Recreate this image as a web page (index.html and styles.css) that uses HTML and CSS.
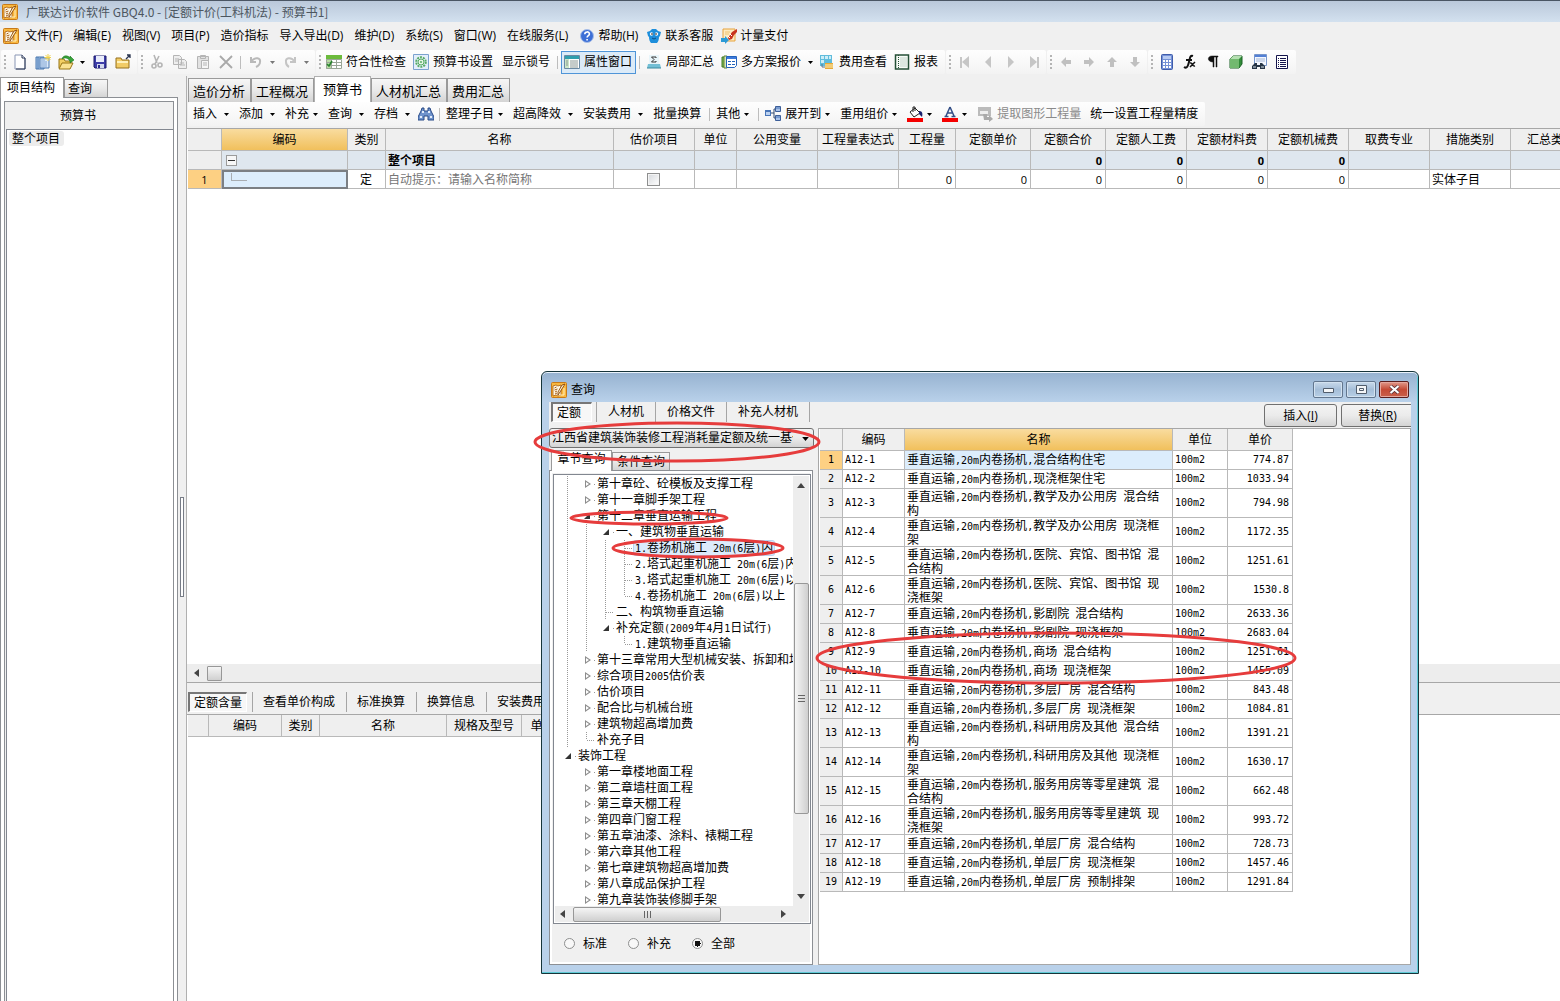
FILE: index.html
```html
<!DOCTYPE html>
<html lang="zh-CN">
<head>
<meta charset="utf-8">
<title>广联达计价软件 GBQ4.0</title>
<link rel="stylesheet" href="styles.css">
</head>
<body>
<svg class="sprite" aria-hidden="true">
  <symbol id="app" viewBox="0 0 16 16"><rect x=".5" y=".5" width="15" height="15" rx="1" fill="#f9b83f" stroke="#c87a18"/><path d="M2 4l3-1 2 1 3-1v10l-3 1-2-1-3 1z" fill="#fff8e4" stroke="#a85c0c" stroke-width=".8"/><path d="M3.500 6l2-1M3.500 8l3-1M4 10l2-1M4 12l2-1" stroke="#a8611a"/><path d="M14 2L9 10l-2 3v-3l4-7z" fill="#fff3d0" stroke="#8c4708" stroke-width=".9"/><path d="M8 13h5V6" fill="none" stroke="#fff0c0"/></symbol>
  <symbol id="dd" viewBox="0 0 5 3"><path d="M0 0h5L2.500 3z" fill="currentColor"/></symbol>
</svg>

<header class="titlebar"><svg class="ic"><use href="#app"/></svg><h1>广联达计价软件 GBQ4.0 - [定额计价(工料机法) - 预算书1]</h1></header>

<nav class="menubar">
  <svg class="ic"><use href="#app"/></svg>
  <button>文件(F)</button><button>编辑(E)</button><button>视图(V)</button><button>项目(P)</button><button>造价指标</button><button>导入导出(D)</button><button>维护(D)</button><button>系统(S)</button><button>窗口(W)</button><button>在线服务(L)</button>
  <button><svg class="ic" viewBox="0 0 16 16"><circle cx="8" cy="8" r="6.500" fill="#3c6fd6" stroke="#a9bfe8"/><path d="M5.800 6.200c0-3 4.600-3 4.600-.2 0 1.700-2.300 1.600-2.300 3.600M8.100 11v1.500" fill="none" stroke="#fff" stroke-width="1.600"/></svg>帮助(H)</button>
  <button class="near"><svg class="ic" viewBox="0 0 16 16"><path d="M1 4l3-1 2-2h4l2 2 3 1-1 4-1 1c0 3-1 5-2 6H5c-1-1-2-3-2-6L2 8z" fill="#1d8edb"/><circle cx="5.500" cy="6" r="1.700" fill="#fff"/><circle cx="10.500" cy="6" r="1.700" fill="#fff"/><circle cx="6" cy="6" r=".8"/><circle cx="10" cy="6" r=".8"/><path d="M6 10l2 1 2-1" stroke="#0b4f86" fill="none"/></svg>联系客服</button>
  <button class="near"><svg class="ic" viewBox="0 0 16 16"><path d="M2 1h12v12H2z" fill="#fdebc0" stroke="#e8a33c"/><path d="M4 4h5M4 6h4" stroke="#f0c272"/><path d="M16 1l-5 3-4 6 1 2 3-1 2-4 3-3z" fill="#c8321e"/><path d="M9 6l2 2M7 8l2 2" stroke="#fff"/><path d="M0 10h4V8l4 4-4 4v-2H0z" fill="#2b9ad6"/></svg>计量支付</button>
</nav>

<div class="toolbars">
  <div class="bar"><span class="grip"></span>
    <button class="tb" aria-label="新建"><svg class="ic" viewBox="0 0 16 16"><path d="M3 1h7l3 3v11H3z" fill="#fff" stroke="#8a97b5"/><path d="M10 1v3h3M13 4v11H4" fill="none" stroke="#26324f"/></svg></button>
    <button class="tb" aria-label="新建项目"><svg class="ic" viewBox="0 0 16 16"><path d="M1 3h8v12H1z" fill="#a9c8ec" stroke="#4976ae"/><path d="M3 3v12M5 4h9v10H5z" fill="#dceafa" stroke="#4976ae"/><path d="M7 5v9M9 5v9M11 7v7" stroke="#7fa3d2"/><path d="M13 0v7M9.500 3.500h7M10.500 1l5 5M15.500 1l-5 5" stroke="#f0d24a"/></svg></button>
    <button class="tb" aria-label="打开"><svg class="ic" viewBox="0 0 16 16"><path d="M1 14V5h5l1 2h6v3" fill="#f3cf62" stroke="#977414"/><path d="M1 15l3-6h11l-3 6z" fill="#fbe391" stroke="#977414"/><path d="M4 5c1-4 6-4 8-1V2l4 4-4 3V7C10 4 7 3 4 5z" fill="#38a53b" stroke="#1b7420" stroke-width=".6"/></svg></button>
    <button class="dd" aria-label="打开选项"><svg><use href="#dd"/></svg></button>
    <button class="tb" aria-label="保存"><svg class="ic" viewBox="0 0 16 16"><path d="M2 2h12v12H3l-1-1z" fill="#3d3da8" stroke="#1b1b6c"/><path d="M4 2h8v6H4z" fill="#e9ecfb"/><path d="M5 10h7v4H5z" fill="#d3d8ee"/><path d="M6 11h2v3H6z" fill="#27278c"/></svg></button>
    <button class="tb" aria-label="关闭文件夹"><svg class="ic" viewBox="0 0 16 16"><path d="M1 4h5l1 2h7v8H1z" fill="#f2cc66" stroke="#96701c"/><path d="M2 8h11" stroke="#fff2bc" stroke-width="2"/><path d="M11 5l4-4M12 1h3v3" fill="none" stroke="#29344f" stroke-width="1.300"/></svg></button>
  </div>
  <div class="bar off"><span class="grip"></span>
    <button class="tb" aria-label="剪切"><svg class="ic" viewBox="0 0 16 16" fill="none" stroke="#b5b5b5" stroke-width="1.600"><path d="M5 1l3 8M10 2L6 10"/><circle cx="5" cy="12" r="2"/><circle cx="11" cy="11" r="2"/></svg></button>
    <button class="tb" aria-label="复制"><svg class="ic" viewBox="0 0 16 16" fill="#eee" stroke="#b5b5b5"><path d="M1.500 1.500h6l2 2v7h-8zM6.500 5.500h6l2 2v7h-8z"/><path d="M3 5h4M3 7h3M8 9h4M8 11h5"/></svg></button>
    <button class="tb" aria-label="粘贴"><svg class="ic" viewBox="0 0 16 16" fill="#e2e2e2" stroke="#b5b5b5"><path d="M2.500 2.500h11v12h-11zM5.500 1.500h5v3h-5z"/><path d="M6.500 6.500h7v8h-7z" fill="#f6f6f6"/><path d="M8 9h4M8 11h4"/></svg></button>
    <button class="tb" aria-label="删除"><svg class="ic" viewBox="0 0 16 16"><path d="M2 2l12 12M14 2L2 14" stroke="#a9a9a9" stroke-width="1.800"/></svg></button>
    <span class="sep"></span>
    <button class="tb" aria-label="撤销"><svg class="ic" viewBox="0 0 16 16" fill="none" stroke="#b9b9b9" stroke-width="2"><path d="M3 3v5h5M3 8c4-6 10-4 9 0 0 2-2 4-4 5"/></svg></button>
    <button class="dd" aria-label="撤销选项"><svg><use href="#dd"/></svg></button>
    <button class="tb" aria-label="恢复"><svg class="ic" viewBox="0 0 16 16" fill="none" stroke="#c4c4c4" stroke-width="2"><path d="M13 3v5H8M13 8C9 2 3 4 4 8c0 2 1 4 3 5"/></svg></button>
    <button class="dd" aria-label="恢复选项"><svg><use href="#dd"/></svg></button>
  </div>
  <div class="bar"><span class="grip"></span>
    <button class="tx"><svg class="ic" viewBox="0 0 16 16"><path d="M0 1h16v14H0z" fill="#fff"/><path d="M0 1h16v4H0z" fill="#6cbb3c"/><path d="M0 5h5v10H0z" fill="#b9dca4"/><path d="M.5 5.500h15v9H.5zM5.500 5v10M10.500 5v10M0 8.500h16M0 11.500h16" fill="none" stroke="#9aa697"/><path d="M1 10l2 2 3-5" fill="none" stroke="#26842c" stroke-width="1.500"/></svg>符合性检查</button>
    <button class="tx"><svg class="ic" viewBox="0 0 16 16"><path d="M.5.500h15v15H.5z" fill="#e3eefb" stroke="#7ba2cf"/><circle cx="8" cy="8" r="4.800" fill="none" stroke="#58ac65" stroke-width="2" stroke-dasharray="2 1"/><circle cx="8" cy="8" r="3" fill="#e5f5e5" stroke="#58ac65"/><circle cx="8" cy="8" r="1" fill="#58ac65"/></svg>预算书设置</button>
    <button class="tx pl">显示锁号</button>
    <span class="sep"></span>
    <button class="tx on"><svg class="ic" viewBox="0 0 16 16"><path d="M.5 1.500h15v13H.5z" fill="#fff" stroke="#6b8aa3"/><path d="M1 2h14v3H1z" fill="#2f9fae"/><path d="M1 5h4v9H1z" fill="#cce6c8"/><path d="M2 7h2M2 9h2M2 11h2M6 7h8M6 9h8M6 11h8M6 13h8" stroke="#8b9894"/></svg>属性窗口</button>
    <span class="sep"></span>
    <button class="tx"><svg class="ic" viewBox="0 0 16 16"><path d="M3 1h10v9H3z" fill="#e8f5fa"/><path d="M2 10h12l1 4H1z" fill="#73bfd5"/><path d="M1 14h14" stroke="#3b8aa0"/><path d="M10 4V3H5.500l2.500 2.500L5.500 8H10V7" fill="none" stroke="#333"/></svg>局部汇总</button>
    <button class="tx"><svg class="ic" viewBox="0 0 16 16"><path d="M1 3h3v10H1z" fill="#7eb650" stroke="#3f7a28"/><path d="M3 2h3v12H3z" fill="#d8e6b8" stroke="#5f8432"/><path d="M5.500 2.500h10v9l-2 2h-8z" fill="#fff" stroke="#2362bb"/><path d="M6 4h9" stroke="#3e7bdb" stroke-width="2"/><path d="M7 7h3v1H7zM11 7h3v1h-3zM7 10h3v1H7zM11 10h3v1h-3z" fill="#2362bb"/></svg>多方案报价</button>
    <button class="dd" aria-label="多方案选项"><svg><use href="#dd"/></svg></button>
    <button class="tx"><svg class="ic" viewBox="0 0 16 16"><path d="M1 1h12v11H1z" fill="#60bcdc"/><path d="M2 2h3v3H2zM6 2h3v3H6zM10 2h2v3h-2zM2 6h3v3H2z" fill="#cceef8"/><path d="M6 9h8v6H6z" fill="#e6a93a"/><path d="M6 11h8M6 13h8" stroke="#fff0b5"/><path d="M3 10v3h3" stroke="#58728c" fill="none"/></svg>费用查看</button>
    <button class="tx"><svg class="ic" viewBox="0 0 16 16"><path d="M1.500 1h13v14h-13z" fill="#f6fbf6" stroke="#244f36" stroke-width="1.500"/><path d="M4.500 1v14" stroke="#244f36" stroke-dasharray="1 1"/><path d="M6 4h7M6 6h7M6 8h7M6 10h7M6 12h7" stroke="#c3d3ca"/></svg>报表</button>
  </div>
  <div class="bar off nav"><span class="grip"></span>
    <button class="tb" aria-label="首条"><svg class="ic" viewBox="0 0 16 16"><path d="M4 3v11" stroke="#c6c6c6" stroke-width="2"/><path d="M12 2v12L5 8z" fill="#c6c6c6"/></svg></button>
    <button class="tb" aria-label="上一条"><svg class="ic" viewBox="0 0 16 16"><path d="M11 2v12L5 8z" fill="#c6c6c6"/></svg></button>
    <button class="tb" aria-label="下一条"><svg class="ic" viewBox="0 0 16 16"><path d="M5 2v12l6-6z" fill="#c6c6c6"/></svg></button>
    <button class="tb" aria-label="末条"><svg class="ic" viewBox="0 0 16 16"><path d="M12 3v11" stroke="#c6c6c6" stroke-width="2"/><path d="M4 2v12l7-6z" fill="#c6c6c6"/></svg></button>
  </div>
  <div class="bar off nav"><span class="grip"></span>
    <button class="tb" aria-label="左移"><svg class="ic" viewBox="0 0 16 16"><path d="M3 8l5-5v3h5v4H8v3z" fill="#c0c0c0"/></svg></button>
    <button class="tb" aria-label="右移"><svg class="ic" viewBox="0 0 16 16"><path d="M13 8L8 3v3H3v4h5v3z" fill="#c0c0c0"/></svg></button>
    <button class="tb" aria-label="上移"><svg class="ic" viewBox="0 0 16 16"><path d="M8 3l5 5h-3v5H6V8H3z" fill="#c0c0c0"/></svg></button>
    <button class="tb" aria-label="下移"><svg class="ic" viewBox="0 0 16 16"><path d="M8 13l5-5h-3V3H6v5H3z" fill="#c0c0c0"/></svg></button>
  </div>
  <div class="bar"><span class="grip"></span>
    <button class="tb" aria-label="计算器"><svg class="ic" viewBox="0 0 16 16"><rect x="2.500" y=".5" width="11" height="15" rx="1" fill="#7491d6" stroke="#3f5cab"/><path d="M4 2h8v3H4z" fill="#b7caf2"/><path d="M4 7h8M4 10h8M4 13h8" stroke="#fff" stroke-width="2" stroke-dasharray="2 1"/></svg></button>
    <button class="tb" aria-label="函数"><svg class="ic" viewBox="0 0 16 16" fill="none" stroke="#111"><path d="M11 2C8 1 8 4 7 8s-2 7-5 5M4 6h6" stroke-width="2"/><path d="M8 9c3-1 2 4 5 3M13 8l-5 5" stroke-width="1.500"/></svg></button>
    <button class="tb" aria-label="段落"><svg class="ic" viewBox="0 0 16 16"><path d="M13 2v1h-1v10h-1V3H9v10H8V8C2 8 2 2 7 2z" fill="#111" stroke="#111" stroke-width=".5"/></svg></button>
    <button class="tb" aria-label="图元"><svg class="ic" viewBox="0 0 16 16"><path d="M2 5l3-3h9v8l-3 4H2z" fill="#318c38" stroke="#1b6125"/><path d="M2 5h9v9H2z" fill="#72b96f"/><path d="M2 5l3-3h9l-3 3z" fill="#b4dfb0"/></svg></button>
    <button class="tb" aria-label="查找"><svg class="ic" viewBox="0 0 16 16"><path d="M3.500.500h12v11h-12z" fill="#f3f7ff" stroke="#7897cb"/><path d="M4 2h11" stroke="#5380d5" stroke-width="2"/><path d="M5 5h9M5 7h9" stroke="#a5b7d5"/><path d="M1 12l3-3h2v2h3V9h2l3 3v3H9v-2H6v2H1z" fill="#263545"/><path d="M2 13h3M10 13h3" stroke="#d9e4ee"/></svg></button>
    <button class="tb" aria-label="列表"><svg class="ic" viewBox="0 0 16 16"><path d="M2.500 1.500h11v13h-11z" fill="#fff" stroke="#15154d"/><path d="M4 4.500h1M6 4.500h6M4 6.500h1M6 6.500h6M4 8.500h1M6 8.500h6M4 10.500h1M6 10.500h6M4 12.500h1M6 12.500h6" stroke="#15154d"/></svg></button>
  </div>
</div>

<main class="work">
  <aside class="side">
    <div class="tabs lt"><button class="tab active">项目结构</button><button class="tab">查询</button></div>
    <div class="sheet"><div class="inner"><h2>预算书</h2><div class="ptree"><span>整个项目</span></div></div></div>
  </aside>
  <div class="splitter"><i></i></div>
  <section class="content">
    <div class="tabs rt"><button class="tab">造价分析</button><button class="tab">工程概况</button><button class="tab active">预算书</button><button class="tab">人材机汇总</button><button class="tab">费用汇总</button></div>
    <div class="subbar"><div class="bar">
      <button class="mn far">插入<svg><use href="#dd"/></svg></button>
      <button class="mn far">添加<svg><use href="#dd"/></svg></button>
      <button class="mn">补充<svg><use href="#dd"/></svg></button>
      <button class="mn far">查询<svg><use href="#dd"/></svg></button>
      <button class="mn far">存档<svg><use href="#dd"/></svg></button>
      <button class="ib" aria-label="查找"><svg class="ic" viewBox="0 0 16 16"><path d="M3 5l1-3h2v3h4V2h2l1 3 3 6v3h-6v-4H6v4H0v-3z" fill="#6f93cc" stroke="#294a87"/><path d="M2 11h2M12 11h2M4 6h2M10 6h2" stroke="#e3edfb" stroke-width="2"/></svg></button>
      <span class="sep"></span>
      <button class="mn">整理子目<svg><use href="#dd"/></svg></button>
      <button class="mn far">超高降效<svg><use href="#dd"/></svg></button>
      <button class="mn far">安装费用<svg><use href="#dd"/></svg></button>
      <button class="mn">批量换算</button>
      <span class="sep"></span>
      <button class="mn">其他<svg><use href="#dd"/></svg></button>
      <span class="sep"></span>
      <button class="mn"><svg class="ic" viewBox="0 0 16 16"><path d="M0 4h6v6H0z" fill="#4975b7"/><path d="M1 6h4v3H1z" fill="#bcd2f1"/><path d="M6 7h3M9 3v9M9 3h2M9 12h2" stroke="#324b70" fill="none"/><path d="M10.500.500h5v5h-5zM10.500 9.500h5v5h-5z" fill="#a9c2e8" stroke="#3d5f99"/><path d="M11 2h4M11 11h4" stroke="#4975b7"/></svg>展开到<svg><use href="#dd"/></svg></button>
      <button class="mn">重用组价<svg><use href="#dd"/></svg></button>
      <button class="mn" aria-label="填充颜色"><svg class="ic" viewBox="0 0 16 16"><path d="M3 6l5-4 5 5-6 4z" fill="#fff" stroke="#222"/><path d="M6 6V1h2v4" fill="none" stroke="#222"/><path d="M12 5c3 0 4 2 3 6l-3-3z" fill="#18206d"/><path d="M0 12h16v4H0z" fill="#f50000"/></svg><svg><use href="#dd"/></svg></button>
      <button class="mn" aria-label="文字颜色"><svg class="ic" viewBox="0 0 16 16"><path d="M8 1L4 10M8 1l4 9M5.500 7h5M2.500 10.500h4M9.500 10.500h4" stroke="#344f87" stroke-width="1.500" fill="none"/><path d="M0 12h16v4H0z" fill="#f50000"/></svg><svg><use href="#dd"/></svg></button>
      <button class="mn dim" disabled><svg class="ic" viewBox="0 0 16 16"><path d="M1 1h13v9H1z" fill="#bbb"/><path d="M3 5h8v3H3z" fill="#eee"/><path d="M6 8h4v3h2V9l4 4-4 3v-2H7z" fill="#aaa"/></svg>提取图形工程量</button>
      <button class="mn">统一设置工程量精度</button>
    </div></div>
    <div class="gridbox">
      <table class="grid main">
        <colgroup><col class="w34"><col class="w126"><col class="w38"><col class="w228"><col class="w81"><col class="w42"><col class="w81"><col class="w81"><col class="w57"><col class="w75"><col class="w75"><col class="w81"><col class="w81"><col class="w81"><col class="w81"><col class="w81"><col class="w81"></colgroup>
        <thead><tr><th></th><th class="hot">编码</th><th>类别</th><th>名称</th><th>估价项目</th><th>单位</th><th>公用变量</th><th>工程量表达式</th><th>工程量</th><th>定额单价</th><th>定额合价</th><th>定额人工费</th><th>定额材料费</th><th>定额机械费</th><th>取费专业</th><th>措施类别</th><th>汇总类别</th></tr></thead>
        <tbody>
          <tr class="sum"><th></th><td><button class="minus" aria-label="折叠"></button></td><td></td><td>整个项目</td><td></td><td></td><td></td><td></td><td></td><td></td><td class="n">0</td><td class="n">0</td><td class="n">0</td><td class="n">0</td><td></td><td></td><td></td></tr>
          <tr><th class="cur">1</th><td class="sel"><i class="elbow"></i></td><td class="c">定</td><td class="hint">自动提示：请输入名称简称</td><td class="c"><input type="checkbox" aria-label="估价项目"></td><td></td><td></td><td></td><td class="n">0</td><td class="n">0</td><td class="n">0</td><td class="n">0</td><td class="n">0</td><td class="n">0</td><td></td><td>实体子目</td><td></td></tr>
        </tbody>
      </table>
      <div class="hbar"><svg class="ar" viewBox="0 0 5 8"><path d="M5 0v8L0 4z"/></svg><i></i></div>
    </div>
    <div class="lower">
      <div class="flat"><button class="press">定额含量</button><button>查看单价构成</button><button>标准换算</button><button>换算信息</button><button>安装费用</button></div>
      <div class="lgrid">
        <table class="grid low">
          <colgroup><col class="w21"><col class="w73"><col class="w38"><col class="w127"><col class="w75"><col class="w42"></colgroup>
          <thead><tr><th></th><th>编码</th><th>类别</th><th>名称</th><th>规格及型号</th><th>单位</th></tr></thead>
        </table>
      </div>
    </div>
  </section>
</main>

<section class="dialog" role="dialog" aria-labelledby="dt">
  <header class="dtitle"><svg class="ic"><use href="#app"/></svg><h2 id="dt">查询</h2>
    <div class="ctl">
      <button aria-label="最小化"><svg viewBox="0 0 11 9"><path d="M.5 3.500h10v4H.5z" fill="#f4f6f8" stroke="#515d6c"/></svg></button>
      <button aria-label="最大化"><svg viewBox="0 0 11 9"><path d="M.5.500h10v8H.5zM3.500 3.500h4v2h-4z" fill="#f4f6f8" stroke="#515d6c"/></svg></button>
      <button class="x" aria-label="关闭"><svg viewBox="0 0 11 9"><path d="M1.500 1l8 7M9.500 1l-8 7" stroke="#53303a" stroke-width="3.600"/><path d="M1.500 1l8 7M9.500 1l-8 7" stroke="#fff" stroke-width="2.200"/></svg></button>
    </div>
  </header>
  <div class="dbody">
    <div class="dtop">
      <div class="flat"><button class="press">定额</button><button>人材机</button><button>价格文件</button><button>补充人材机</button></div>
      <div class="acts"><button>插入(<u>I</u>)</button><button>替换(<u>R</u>)</button></div>
    </div>
    <div class="dcols">
      <div class="dleft">
        <div class="combo"><select aria-label="定额库"><option>江西省建筑装饰装修工程消耗量定额及统一基价表</option></select><svg><use href="#dd"/></svg></div>
        <div class="tabs qt"><button class="tab active">章节查询</button><button class="tab">条件查询</button></div>
        <div class="qpage">
          <div class="treebox">
            <ul class="tree">
              <li><i class="v"></i><i class="a"></i><span>第十章砼、砼模板及支撑工程</span></li>
              <li><i class="v"></i><i class="a"></i><span>第十一章脚手架工程</span></li>
              <li><i class="v"></i><i class="o"></i><span>第十二章垂直运输工程</span></li>
              <li><i class="v"></i><i class="v"></i><i class="o"></i><span>一、建筑物垂直运输</span></li>
              <li><i class="v"></i><i class="v"></i><i class="v"></i><i class="t"></i><span class="pick"><b>1.</b>卷扬机施工<b> 20m(6</b>层<b>)</b>内</span></li>
              <li><i class="v"></i><i class="v"></i><i class="v"></i><i class="t"></i><span><b>2.</b>塔式起重机施工<b> 20m(6</b>层<b>)</b>内</span></li>
              <li><i class="v"></i><i class="v"></i><i class="v"></i><i class="t"></i><span><b>3.</b>塔式起重机施工<b> 20m(6</b>层<b>)</b>以上</span></li>
              <li><i class="v"></i><i class="v"></i><i class="v"></i><i class="e"></i><span><b>4.</b>卷扬机施工<b> 20m(6</b>层<b>)</b>以上</span></li>
              <li><i class="v"></i><i class="v"></i><i class="t"></i><span>二、构筑物垂直运输</span></li>
              <li><i class="v"></i><i class="v"></i><i class="o"></i><span>补充定额<b>(2009</b>年<b>4</b>月<b>1</b>日试行<b>)</b></span></li>
              <li><i class="v"></i><i class="v"></i><i></i><i class="e"></i><span><b>1.</b>建筑物垂直运输</span></li>
              <li><i class="v"></i><i class="a"></i><span>第十三章常用大型机械安装、拆卸和场外运输</span></li>
              <li><i class="v"></i><i class="a"></i><span>综合项目<b>2005</b>估价表</span></li>
              <li><i class="v"></i><i class="a"></i><span>估价项目</span></li>
              <li><i class="v"></i><i class="a"></i><span>配合比与机械台班</span></li>
              <li><i class="v"></i><i class="a"></i><span>建筑物超高增加费</span></li>
              <li><i class="v"></i><i class="e"></i><span>补充子目</span></li>
              <li><i class="o"></i><span>装饰工程</span></li>
              <li><i></i><i class="a"></i><span>第一章楼地面工程</span></li>
              <li><i></i><i class="a"></i><span>第二章墙柱面工程</span></li>
              <li><i></i><i class="a"></i><span>第三章天棚工程</span></li>
              <li><i></i><i class="a"></i><span>第四章门窗工程</span></li>
              <li><i></i><i class="a"></i><span>第五章油漆、涂料、裱糊工程</span></li>
              <li><i></i><i class="a"></i><span>第六章其他工程</span></li>
              <li><i></i><i class="a"></i><span>第七章建筑物超高增加费</span></li>
              <li><i></i><i class="a"></i><span>第八章成品保护工程</span></li>
              <li><i></i><i class="a"></i><span>第九章装饰装修脚手架</span></li>
            </ul>
            <div class="vs"><svg class="arv" viewBox="0 0 8 5"><path d="M0 5h8L4 0z"/></svg><i></i><svg class="arv" viewBox="0 0 8 5"><path d="M0 0h8L4 5z"/></svg></div>
            <div class="hs"><svg class="ar" viewBox="0 0 5 8"><path d="M5 0v8L0 4z"/></svg><i></i><svg class="ar" viewBox="0 0 5 8"><path d="M0 0v8l5-4z"/></svg></div>
          </div>
          <div class="radios"><label><input type="radio" name="r">标准</label><label><input type="radio" name="r">补充</label><label><input type="radio" name="r" checked>全部</label></div>
        </div>
      </div>
      <div class="dright">
        <table class="grid quota">
          <colgroup><col class="w23"><col class="w62"><col class="w268"><col class="w55"><col class="w65"></colgroup>
          <thead><tr><th></th><th>编码</th><th class="hot">名称</th><th>单位</th><th>单价</th></tr></thead>
          <tbody>
            <tr><th class="cur">1</th><td class="m">A12-1</td><td class="lit">垂直运输<b>,20m</b>内卷扬机<b>,</b>混合结构住宅</td><td class="m">100m2</td><td class="m n">774.87</td></tr>
            <tr><th>2</th><td class="m">A12-2</td><td>垂直运输<b>,20m</b>内卷扬机<b>,</b>现浇框架住宅</td><td class="m">100m2</td><td class="m n">1033.94</td></tr>
            <tr class="two"><th>3</th><td class="m">A12-3</td><td>垂直运输<b>,20m</b>内卷扬机<b>,</b>教学及办公用房<b> </b>混合结构</td><td class="m">100m2</td><td class="m n">794.98</td></tr>
            <tr class="two"><th>4</th><td class="m">A12-4</td><td>垂直运输<b>,20m</b>内卷扬机<b>,</b>教学及办公用房<b> </b>现浇框架</td><td class="m">100m2</td><td class="m n">1172.35</td></tr>
            <tr class="two"><th>5</th><td class="m">A12-5</td><td>垂直运输<b>,20m</b>内卷扬机<b>,</b>医院、宾馆、图书馆<b> </b>混合结构</td><td class="m">100m2</td><td class="m n">1251.61</td></tr>
            <tr class="two"><th>6</th><td class="m">A12-6</td><td>垂直运输<b>,20m</b>内卷扬机<b>,</b>医院、宾馆、图书馆<b> </b>现浇框架</td><td class="m">100m2</td><td class="m n">1530.8</td></tr>
            <tr><th>7</th><td class="m">A12-7</td><td>垂直运输<b>,20m</b>内卷扬机<b>,</b>影剧院<b> </b>混合结构</td><td class="m">100m2</td><td class="m n">2633.36</td></tr>
            <tr><th>8</th><td class="m">A12-8</td><td>垂直运输<b>,20m</b>内卷扬机<b>,</b>影剧院<b> </b>现浇框架</td><td class="m">100m2</td><td class="m n">2683.04</td></tr>
            <tr><th>9</th><td class="m">A12-9</td><td>垂直运输<b>,20m</b>内卷扬机<b>,</b>商场<b> </b>混合结构</td><td class="m">100m2</td><td class="m n">1251.61</td></tr>
            <tr><th>10</th><td class="m">A12-10</td><td>垂直运输<b>,20m</b>内卷扬机<b>,</b>商场<b> </b>现浇框架</td><td class="m">100m2</td><td class="m n">1455.09</td></tr>
            <tr><th>11</th><td class="m">A12-11</td><td>垂直运输<b>,20m</b>内卷扬机<b>,</b>多层厂房<b> </b>混合结构</td><td class="m">100m2</td><td class="m n">843.48</td></tr>
            <tr><th>12</th><td class="m">A12-12</td><td>垂直运输<b>,20m</b>内卷扬机<b>,</b>多层厂房<b> </b>现浇框架</td><td class="m">100m2</td><td class="m n">1084.81</td></tr>
            <tr class="two"><th>13</th><td class="m">A12-13</td><td>垂直运输<b>,20m</b>内卷扬机<b>,</b>科研用房及其他<b> </b>混合结构</td><td class="m">100m2</td><td class="m n">1391.21</td></tr>
            <tr class="two"><th>14</th><td class="m">A12-14</td><td>垂直运输<b>,20m</b>内卷扬机<b>,</b>科研用房及其他<b> </b>现浇框架</td><td class="m">100m2</td><td class="m n">1630.17</td></tr>
            <tr class="two"><th>15</th><td class="m">A12-15</td><td>垂直运输<b>,20m</b>内卷扬机<b>,</b>服务用房等零星建筑<b> </b>混合结构</td><td class="m">100m2</td><td class="m n">662.48</td></tr>
            <tr class="two"><th>16</th><td class="m">A12-16</td><td>垂直运输<b>,20m</b>内卷扬机<b>,</b>服务用房等零星建筑<b> </b>现浇框架</td><td class="m">100m2</td><td class="m n">993.72</td></tr>
            <tr><th>17</th><td class="m">A12-17</td><td>垂直运输<b>,20m</b>内卷扬机<b>,</b>单层厂房<b> </b>混合结构</td><td class="m">100m2</td><td class="m n">728.73</td></tr>
            <tr><th>18</th><td class="m">A12-18</td><td>垂直运输<b>,20m</b>内卷扬机<b>,</b>单层厂房<b> </b>现浇框架</td><td class="m">100m2</td><td class="m n">1457.46</td></tr>
            <tr><th>19</th><td class="m">A12-19</td><td>垂直运输<b>,20m</b>内卷扬机<b>,</b>单层厂房<b> </b>预制排架</td><td class="m">100m2</td><td class="m n">1291.84</td></tr>
          </tbody>
        </table>
      </div>
    </div>
  </div>
  <svg class="marks" viewBox="0 0 878 603" aria-hidden="true" fill="none" stroke="#e63c3c" stroke-width="3">
    <ellipse cx="136" cy="71" rx="142" ry="19"/>
    <ellipse cx="108" cy="147" rx="78" ry="6"/>
    <ellipse cx="157" cy="177" rx="85" ry="9"/>
    <ellipse cx="515" cy="287" rx="239" ry="25"/>
  </svg>
</section>
</body>
</html>
```
FILE: styles.css
```css
* { box-sizing: border-box; }
html, body { height: 100%; }
body {
  margin: 0;
  display: flex;
  flex-direction: column;
  overflow: hidden;
  background: #f0f0f0;
  color: #000;
  font: 12px/16px "Open Sans", "Noto Sans CJK SC", sans-serif;
}
h1, h2 { margin: 0; font-size: 12px; font-weight: normal; }
button { margin: 0; padding: 0; border: 0; background: none; color: inherit; font: inherit; white-space: nowrap; flex: none; }
svg { display: block; flex: none; }
i { display: block; flex: none; }
.sprite { display: none; }
.ic { width: 16px; height: 16px; }

/* Title and menu */
.titlebar {
  flex: none;
  display: flex;
  align-items: center;
  gap: 8px;
  height: 22px;
  padding-left: 2px;
  border-top: 1px solid #4a5563;
  background: linear-gradient(#bac8da, #d3e1ef);
  color: #4c5660;
}
.titlebar h1 { font-family: "Noto Sans CJK SC", sans-serif; }
.menubar { flex: none; display: flex; align-items: center; gap: 11px; height: 28px; padding: 0 3px; }
.menubar > .ic { margin-right: -5px; }
.menubar button { display: flex; align-items: center; gap: 3px; }
.menubar .near { margin-left: -3px; }

/* Toolbars */
.toolbars { flex: none; display: flex; gap: 1px; height: 26px; padding-left: 1px; }
.bar { flex: none; display: flex; align-items: center; height: 24px; padding-right: 3px; border-radius: 2px; background: linear-gradient(#fefefe, #f3f3f3); }
.grip { width: 2px; height: 14px; margin: 0 2px 0 3px; background: repeating-linear-gradient(#b4b4b4 0 2px, transparent 2px 4px); }
.tb { display: flex; justify-content: center; width: 23px; }
.dd { display: flex; justify-content: center; width: 11px; }
.dd svg, .mn svg:not(.ic), .combo svg { width: 5px; height: 3px; }
.off .dd { color: #777; }
.tx { display: flex; align-items: center; gap: 4px; height: 23px; padding: 0 4px 0 3px; }
.tx.pl { padding-left: 5px; }
.tx.on { border: 1px solid #4f95d8; padding: 0 3px 0 2px; background: #dcebf8; }
.sep { width: 1px; height: 13px; margin: 0 3px; background: #bdbdbd; }
.nav { padding-right: 1px; }

/* Tabs shared by all three tab strips */
.tabs { flex: none; display: flex; align-items: flex-end; }
.tab { border: 1px solid #9a9a9a; background: linear-gradient(#f6f6f6, #e9e9e9 50%, #d4d4d4); border-bottom: 0; }
.tab.active { position: relative; background: #fff; }

.work { flex: 1; display: flex; min-height: 0; }
.side { flex: none; display: flex; flex-direction: column; width: 178px; }
.lt { height: 21px; }
.lt .tab { height: 18px; width: 44px; padding-right: 12px; }
.lt .tab.active { height: 21px; width: 64px; padding-right: 2px; margin-bottom: -1px; }
.sheet { flex: 1; display: flex; padding: 3px 3px 0; border: 1px solid #8c8f94; border-bottom: 0; background: #fff; }
.inner { flex: 1; display: flex; flex-direction: column; border: 1px solid #8c8f94; border-bottom: 0; background: #f0f0f0; }
.inner h2 { height: 27px; padding-right: 22px; line-height: 27px; text-align: center; }
.ptree { flex: 1; margin-left: 1px; border: 1px solid #828790; border-width: 1px 0 0 1px; background: #fff; padding: 1px 2px; }
.ptree span { display: inline-block; height: 15px; padding: 0 4px 0 3px; border-radius: 3px; background: #ececec; line-height: 15px; }
.splitter { flex: none; display: flex; align-items: center; justify-content: center; width: 9px; border-right: 1px solid #b0b0b0; }
.splitter i { width: 4px; height: 100px; margin-top: 16px; border: 1px solid #777c86; background: #fff; }

.content { flex: 1; display: flex; flex-direction: column; min-width: 0; }
.rt { height: 26px; padding-left: 1px; font-size: 13px; }
.rt .tab { height: 24px; padding: 0 5px 0 4px; }
.rt .tab.active { height: 26px; padding: 0 8px 2px; border-color: #b0b0b0; }
.subbar { flex: none; height: 26px; display: flex; padding-left: 1px; }
.subbar .sep { margin: 0 1px 0 4px; }
.mn { display: flex; align-items: center; gap: 4px; height: 22px; padding: 0 4px 0 5px; }
.mn.far { gap: 7px; }
.mn:has(svg:not(.ic)) { padding-right: 5px; }
.ib { display: flex; justify-content: center; width: 18px; margin-left: 2px; }
.dim { color: #8a8a8a; }

/* Data grids */
.gridbox { flex: 1; display: flex; flex-direction: column; min-height: 0; overflow: hidden; border: 1px solid #a7a7a7; border-width: 1px 0; background: #fff; }
.grid { table-layout: fixed; border-collapse: separate; border-spacing: 0; width: 0; flex: none; }
.main, .low { margin-left: 1px; }
.grid th, .grid td { height: 19px; padding: 0 3px 0 2px; border: 1px solid #b9b9b9; border-width: 0 1px 1px 0; font-weight: normal; line-height: 13px; text-align: left; overflow: hidden; }
.grid th { padding: 0; background: #efefef; text-align: center; }
.grid thead th { height: 22px; white-space: nowrap; }
.grid thead .hot { background: linear-gradient(#f9dc9f, #f1c05c); }
.grid tbody .cur { background: #fdd083; }
.grid .n { text-align: right; }
.grid .c { text-align: center; }
.grid .sum td { background: #dfe7ef; font-weight: bold; }
.main .n, .main tbody th { font-size: 11px; }
.grid td.hint { color: #767676; }
.grid td.sel { border: 2px solid #7b7f84; background: #dcedfc; }
.elbow { width: 16px; height: 8px; margin: -6px 0 0 5px; border: 1px solid #a8adb2; border-width: 0 0 1px 1px; }
.minus { display: flex; align-items: center; justify-content: center; width: 11px; height: 11px; margin-left: 2px; border: 1px solid #9b9b9b; background: #f7f7f7; }
.minus::before { content: ""; width: 7px; height: 1px; background: #333; }
.w21 { width: 21px; } .w23 { width: 23px; } .w34 { width: 34px; } .w38 { width: 38px; }
.w42 { width: 42px; } .w55 { width: 55px; } .w57 { width: 57px; } .w62 { width: 62px; }
.w65 { width: 65px; } .w73 { width: 73px; } .w75 { width: 75px; } .w81 { width: 81px; }
.w126 { width: 126px; } .w127 { width: 127px; } .w228 { width: 228px; } .w268 { width: 268px; }
input[type=checkbox] { appearance: none; display: block; width: 13px; height: 13px; margin: 0 auto; border: 1px solid #8e8f8f; background: linear-gradient(135deg, #d5d8dc, #fff); box-shadow: inset 0 0 0 1px #f4f4f4; }

.hbar, .hs { display: flex; align-items: center; background: #ededed; }
.hbar { height: 18px; margin-top: auto; padding-left: 7px; gap: 8px; }
.ar { width: 5px; height: 8px; fill: #444; }
.arv { width: 8px; height: 5px; fill: #444; }
.hbar i { width: 15px; height: 15px; border: 1px solid #979797; border-radius: 1px; background: linear-gradient(#f5f5f5, #d0d0d0); }

.lower { flex: none; display: flex; flex-direction: column; height: 318px; padding-top: 8px; overflow: hidden; }
.flat { display: flex; }
.flat button { height: 20px; padding: 0 11px 0 10px; margin-top: 1px; border-right: 1px solid #a5a5a5; }
.flat .press { border: 1px solid #fff; border-color: #777 #fff #fff #777; border-width: 2px 1px 1px 2px; background: #f7f7f7; line-height: 16px; padding: 0 4px; }
.lower .flat { padding-left: 1px; }
.lower .press { margin-right: 5px; }
.lower .press + button { border-left: 1px solid #a5a5a5; }
.lgrid { flex: 1; margin-top: 2px; border-top: 1px solid #a7a7a7; background: #fff; }

/* Query window */
.dialog {
  position: absolute;
  left: 541px;
  top: 371px;
  display: flex;
  flex-direction: column;
  width: 878px;
  height: 603px;
  padding: 0 7px 8px;
  border: 1px solid #16343a;
  border-radius: 6px 6px 0 0;
  background: linear-gradient(#96b2d0, #b9d1ea 30px);
  box-shadow: inset 0 1px #e9f2fb, inset -1px -1px #5fcbd6;
}
.dtitle { flex: none; display: flex; align-items: center; gap: 4px; height: 30px; padding: 5px 2px 0 2px; }
.ctl { display: flex; gap: 3px; margin-left: auto; }
.ctl button { display: flex; align-items: center; justify-content: center; width: 30px; height: 17px; border: 1px solid #62768e; border-radius: 2px; background: linear-gradient(#c8d9ea, #a5bed8 50%, #b7cfe6); box-shadow: inset 0 0 0 1px #d3e2f0; }
.ctl svg { width: 11px; height: 9px; }
.ctl .x { border-color: #5a1d1d; background: linear-gradient(#e19a8c, #c54a35 50%, #c9604b); box-shadow: inset 0 0 0 1px #e6a79d; }
.dbody { flex: 1; display: flex; flex-direction: column; min-height: 0; background: #f0f0f0; overflow: hidden; }
.dtop { flex: none; display: flex; justify-content: space-between; height: 26px; padding-left: 2px; }
.dtop .flat button { padding: 0 11px; margin-top: 0; }
.dtop .flat .press { width: 41px; margin-right: 4px; padding: 0 4px; text-align: left; }
.dtop .press + button { border-left: 1px solid #a5a5a5; }
.acts { display: flex; gap: 4px; margin-right: -3px; padding-top: 2px; }
.acts button { width: 73px; height: 23px; border: 1px solid #707070; border-radius: 3px; background: linear-gradient(#f3f3f3, #ebebeb 50%, #d4d4d4); }
.dcols { flex: 1; display: flex; gap: 4px; min-height: 0; }
.dleft { flex: none; display: flex; flex-direction: column; width: 265px; }
.combo { position: relative; height: 20px; }
.combo select { appearance: none; width: 100%; height: 20px; padding: 0 20px 0 2px; border: 1px solid #707070; border-radius: 3px; background: linear-gradient(#f3f3f3, #ebebeb 50%, #d3d3d3); font: inherit; color: inherit; }
.combo svg { position: absolute; right: 5px; top: 9px; width: 7px; height: 4px; }
.qt { height: 22px; padding-left: 2px; }
.qt .tab { width: 58px; height: 18px; }
.qt .tab.active { width: 61px; height: 21px; padding-bottom: 4px; margin-bottom: -1px; }
.qpage { flex: 1; display: flex; flex-direction: column; min-height: 0; padding: 3px 1px 1px 3px; margin-right: 1px; border: 1px solid #8c8f94; background: #f0f0f0; box-shadow: inset 0 0 0 2px #fff; }
.treebox { flex: 1; display: grid; grid-template-columns: minmax(0, 1fr) 16px; grid-template-rows: minmax(0, 1fr) 16px; border: 1px solid #828790; padding: 1px; background: #fff; min-height: 0; }
.tree { margin: 0; padding: 0 0 0 3px; list-style: none; overflow: hidden; }
.tree li { display: flex; height: 16px; white-space: nowrap; }
.tree span { flex: none; padding: 0 1px; }
.tree .pick { border-radius: 2px; background: #dcebfb; box-shadow: 0 0 0 1px #b9d6f3; height: 14px; margin-top: 1px; line-height: 14px; }
.tree i { position: relative; width: 19px; height: 16px; }
.tree .v { background: repeating-linear-gradient(#999 0 1px, transparent 1px 2px) 9px 0 / 1px 16px no-repeat; }
.tree .t, .tree .e { background: repeating-linear-gradient(#999 0 1px, transparent 1px 2px) 9px 0 / 1px 16px no-repeat, repeating-linear-gradient(90deg, #999 0 1px, transparent 1px 2px) 10px 8px / 8px 1px no-repeat; }
.tree .e { background-size: 1px 8px, 8px 1px; }
.tree .a { background: linear-gradient(#999, #999) 17px 8px / 1px 1px no-repeat; }
.tree .a::before { content: ""; position: absolute; left: 8px; top: 4px; width: 6px; height: 8px; background: #8d8d8d; clip-path: polygon(0 0, 100% 50%, 0 100%); }
.tree .a::after { content: ""; position: absolute; left: 9px; top: 6px; width: 3px; height: 4px; background: #fff; clip-path: polygon(0 0, 100% 50%, 0 100%); }
.tree .o { background: linear-gradient(#999, #999) 17px 8px / 1px 1px no-repeat; }
.tree .o::before { content: ""; position: absolute; left: 7px; top: 5px; width: 6px; height: 6px; background: #333; clip-path: polygon(100% 0, 100% 100%, 0 100%); }
.tree b, .quota b, .quota .m, .quota tbody th { font: 10px/12px "DejaVu Sans Mono", monospace; white-space: pre-wrap; }
.tree b { white-space: pre; }
.vs { display: flex; flex-direction: column; align-items: center; padding: 7px 0; background: #ededed; }
.vs i { width: 15px; height: 231px; margin: auto 0 80px; border: 1px solid #979797; border-radius: 2px; background: repeating-linear-gradient(#666 0 1px, transparent 1px 3px) center / 7px 7px no-repeat, linear-gradient(90deg, #f5f5f5, #cfcfcf); }
.hs { grid-column: 1 / 3; padding: 0 23px 0 5px; gap: 8px; }
.hs i { width: 148px; height: 15px; margin-right: auto; border: 1px solid #979797; border-radius: 2px; background: repeating-linear-gradient(90deg, #666 0 1px, transparent 1px 3px) center / 7px 7px no-repeat, linear-gradient(#f5f5f5, #cfcfcf); }
.radios { flex: none; display: flex; gap: 26px; height: 39px; padding-left: 11px; align-items: center; }
.radios label { display: flex; align-items: center; gap: 8px; width: 38px; white-space: nowrap; }
input[type=radio] { appearance: none; flex: none; width: 11px; height: 11px; margin: 0; border: 1px solid #8e8f8f; border-radius: 50%; background: #f8f8f8; }
input[type=radio]:checked { background: radial-gradient(circle, #111 0 3px, #f8f8f8 3px); }
.dright { flex: 1; border: 1px solid #a7a7a7; background: #fff; overflow: hidden; padding-left: 1px; }
.quota .lit { background: #dcedfc; }
.quota .two > * { height: 29px; }
.marks { position: absolute; left: -1px; top: -1px; width: 878px; height: 603px; overflow: visible; pointer-events: none; }
```
